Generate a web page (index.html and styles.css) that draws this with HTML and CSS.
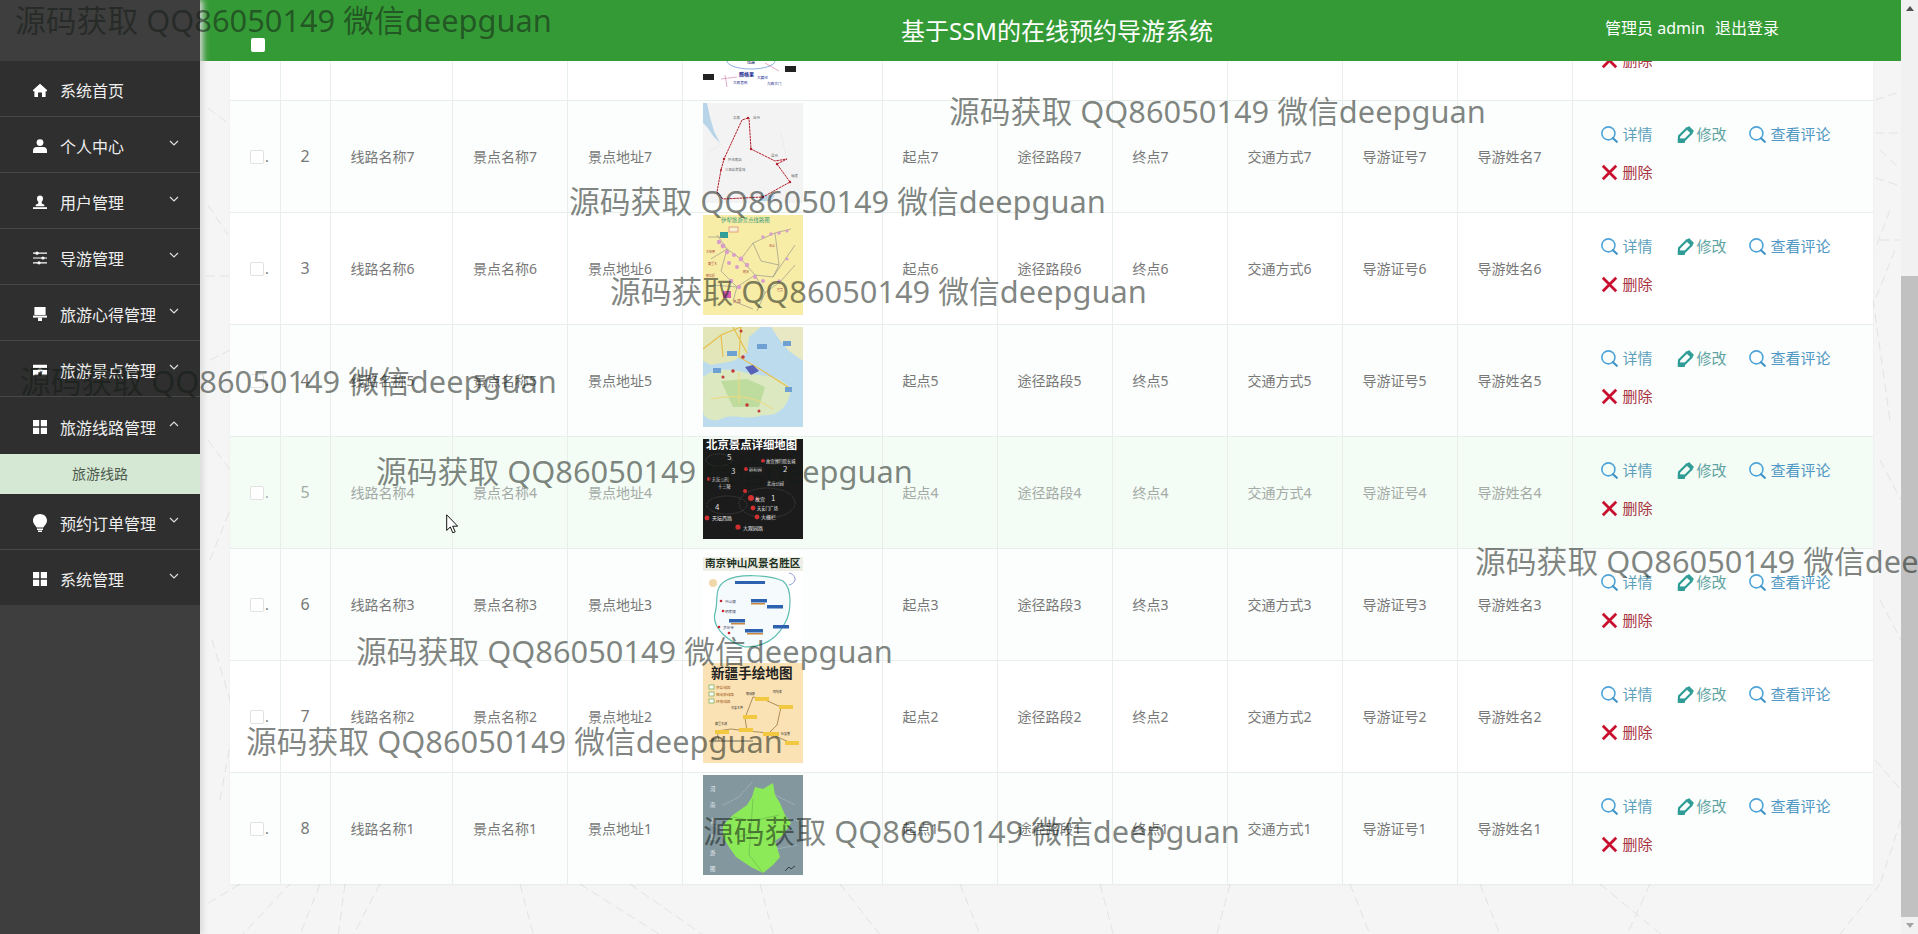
FILE: index.html
```html
<!DOCTYPE html>
<html lang="zh-CN">
<head>
<meta charset="utf-8">
<title>基于SSM的在线预约导游系统</title>
<link rel="stylesheet" href="styles.css">
</head>
<body>
<svg class="defs" width="0" height="0" aria-hidden="true">
  <symbol id="i-search" viewBox="0 0 17 17"><circle cx="7.400" cy="7.400" r="6.500" fill="none" stroke="#4ea4d8" stroke-width="1.600"/><path d="M12 12.200l3.800 3.600" fill="none" stroke="#3f93c8" stroke-width="2.200" stroke-linecap="round"/></symbol>
  <symbol id="i-edit" viewBox="0 0 17 17"><path d="M2 15V10.300L10 2.300l4.700 4.700L6.700 15z" fill="none" stroke="#2f9c95" stroke-width="2.200"/><path d="M12 0 17 5 15.300 6.700 10.300 1.700z" fill="#2f9c95"/><path d="M.8 12.400h7V17h-7z" fill="#2f9c95"/></symbol>
  <symbol id="i-del" viewBox="0 0 17 17"><path d="M1.800 1.800l13.400 13.400M15.200 1.800 1.800 15.200" fill="none" stroke="#c8102e" stroke-width="2.800"/></symbol>
  <symbol id="i-home" viewBox="0 0 14 14"><path d="M7 .8 14 7v1.200h-1.400V14H9V9.400H5V14H1.400V8.200H0V7z" fill="#fff"/></symbol>
  <symbol id="i-user" viewBox="0 0 14 14"><circle cx="7" cy="3.600" r="3.400" fill="#fff"/><path d="M0 14v-2.600C0 9.200 2 8 3.800 8h6.400C12 8 14 9.200 14 11.400V14z" fill="#fff"/></symbol>
  <symbol id="i-tie" viewBox="0 0 14 14"><path d="M4 3.200C4 1.400 5.300.4 7 .4s3 1 3 2.800c0 1.700-.7 3-1.300 3.800V8.400l2.600 1.400v1.400H2.700V9.800l2.600-1.400V7C4.700 6.200 4 4.900 4 3.200z" fill="#fff"/><path d="M0 12.200h14V14H0z" fill="#fff"/></symbol>
  <symbol id="i-sliders" viewBox="0 0 14 14"><path d="M0 2.200h14M0 7h14M0 11.800h14" stroke="#fff" stroke-width="1.200"/><circle cx="4" cy="2.200" r="1.600" fill="#fff"/><circle cx="10" cy="7" r="1.600" fill="#fff"/><circle cx="6" cy="11.800" r="1.600" fill="#fff"/></symbol>
  <symbol id="i-desk" viewBox="0 0 14 14"><path d="M1.400 0h11.200v8H1.400z" fill="#fff"/><path d="M0 8.600h14v2H0z" fill="#fff"/><path d="M5 10.600h4V14H5z" fill="#fff"/></symbol>
  <symbol id="i-shop" viewBox="0 0 16 12"><path d="M0 0h16v3.600H0z" fill="#fff"/><path d="M0 5.600h5l2-1.200h2l2 1.200h5V12H10V8.600H6V12H0z" fill="#fff"/></symbol>
  <symbol id="i-grid" viewBox="0 0 14 14"><path d="M0 0h6.200v6.200H0zM7.800 0H14v6.200H7.800zM0 7.800h6.200V14H0zM7.800 7.800H14V14H7.800z" fill="#fff"/></symbol>
  <symbol id="i-bulb" viewBox="0 0 14 18"><path d="M7 0c3.800 0 7 2.800 7 6.600 0 2.700-1.600 4.100-2.700 5.400-.6.7-.8 1.400-.8 1.600h-7c0-.2-.2-.9-.8-1.600C1.600 10.700 0 9.300 0 6.600 0 2.800 3.200 0 7 0z" fill="#fff"/><path d="M4 14.600h6v1.300H4zM5 16.500h4V18H5z" fill="#fff"/></symbol>
  <symbol id="i-down" viewBox="0 0 10 6"><path d="M1 1l4 4 4-4" fill="none" stroke="#ddd" stroke-width="1.200"/></symbol>
  <symbol id="i-up" viewBox="0 0 10 6"><path d="M1 5l4-4 4 4" fill="none" stroke="#ddd" stroke-width="1.200"/></symbol>
</svg>

<div class="app">
  <aside class="sidebar">
    <div class="brand"></div>
    <nav class="menu">
      <a class="item"><svg class="mi"><use href="#i-home"/></svg><span>系统首页</span></a>
      <a class="item"><svg class="mi"><use href="#i-user"/></svg><span>个人中心</span><svg class="chev"><use href="#i-down"/></svg></a>
      <a class="item"><svg class="mi"><use href="#i-tie"/></svg><span>用户管理</span><svg class="chev"><use href="#i-down"/></svg></a>
      <a class="item"><svg class="mi"><use href="#i-sliders"/></svg><span>导游管理</span><svg class="chev"><use href="#i-down"/></svg></a>
      <a class="item"><svg class="mi"><use href="#i-desk"/></svg><span>旅游心得管理</span><svg class="chev"><use href="#i-down"/></svg></a>
      <a class="item"><svg class="mi"><use href="#i-shop"/></svg><span>旅游景点管理</span><svg class="chev"><use href="#i-down"/></svg></a>
      <a class="item open"><svg class="mi"><use href="#i-grid"/></svg><span>旅游线路管理</span><svg class="chev"><use href="#i-up"/></svg></a>
      <a class="sub">旅游线路</a>
      <a class="item"><svg class="mi bulb"><use href="#i-bulb"/></svg><span>预约订单管理</span><svg class="chev"><use href="#i-down"/></svg></a>
      <a class="item last"><svg class="mi"><use href="#i-grid"/></svg><span>系统管理</span><svg class="chev"><use href="#i-down"/></svg></a>
    </nav>
  </aside>

  <main class="main">
    <svg class="bgnet" viewBox="0 0 1701 934" preserveAspectRatio="none" aria-hidden="true">
      <g fill="none" stroke="#e3e3e3" stroke-width="1" stroke-dasharray="9 5">
        <path d="M8 108 30 125M8 205 28 235M6 276h24M10 360 30 350M8 440 30 470M10 560 30 510M12 640 30 700M20 800 30 745"/>
        <path d="M0 980 90 884M40 884 5 905M120 884 90 960M145 884 135 960M180 884 140 960M320 884 340 960M380 884 500 960M430 884 510 940"/>
        <path d="M560 884 580 960M640 884 700 960M760 884 790 960M900 884 920 960M1030 884 1010 960M1150 884 1180 960M1280 884 1310 960M1400 884 1480 950M1450 884 1420 950M1680 884 1640 934"/>
        <path d="M1675 100 1700 92M1675 133h28M1680 150 1701 170M1675 178 1701 186M1690 210 1675 250M1680 240h20M1695 250 1675 300M1673 300 1690 420M1680 460 1701 500M1680 600 1701 640M1675 760 1701 790M1701 820 1680 884"/>
      </g>
    </svg>

    <header class="topbar">
      <h1 class="title">基于SSM的在线预约导游系统</h1>
      <div class="user"><span>管理员 admin</span><a>退出登录</a></div>
    </header>
    <span class="all-check"></span>

    <table class="grid">
      <colgroup>
        <col class="c-s"><col class="c-s"><col class="c-a"><col class="c-m"><col class="c-m"><col class="c-p">
        <col class="c-m"><col class="c-m"><col class="c-m"><col class="c-m"><col class="c-m"><col class="c-m"><col class="c-o">
      </colgroup>
      <tbody>
        <tr>
          <td><input type="checkbox" class="ck">.</td><td class="num">1</td><td>线路名称8</td><td>景点名称8</td><td>景点地址8</td>
          <td class="pic"><svg class="map" viewBox="0 0 100 100"><rect width="100" height="100" fill="#fff"/><ellipse cx="48" cy="70" rx="24" ry="8" fill="none" stroke="#5a8fd0" stroke-width=".7"/><text x="44" y="73" font-size="4" fill="#226">线路</text><path d="M62 72 76 80M18 88 34 86M22 84 24 96" stroke="#d78bb0" stroke-width=".7" fill="none"/><rect x="0" y="83" width="11" height="6" fill="#222"/><rect x="82" y="75" width="11" height="6" fill="#222"/><text x="36" y="85" font-size="5" font-weight="700" fill="#1a2a90">腾格里</text><text x="54" y="88" font-size="3.600" fill="#1a2a90">大藏经</text><text x="30" y="93" font-size="3.600" fill="#1a2a90">大观音阁</text><text x="64" y="94" font-size="3.600" fill="#1a2a90">九园大门</text></svg></td>
          <td>起点8</td><td>途径路段8</td><td>终点8</td><td>交通方式8</td><td>导游证号8</td><td>导游姓名8</td>
          <td class="ops"><div class="acts"><a class="a-view"><svg class="ai"><use href="#i-search"/></svg>详情</a><a class="a-edit"><svg class="ai"><use href="#i-edit"/></svg>修改</a><a class="a-rev"><svg class="ai"><use href="#i-search"/></svg>查看评论</a><a class="a-del"><svg class="ai"><use href="#i-del"/></svg>删除</a></div></td>
        </tr>
        <tr class="tint">
          <td><input type="checkbox" class="ck">.</td><td class="num">2</td><td>线路名称7</td><td>景点名称7</td><td>景点地址7</td>
          <td class="pic"><svg class="map" viewBox="0 0 100 100"><rect width="100" height="100" fill="#f3f3f3"/><path d="M0 0h4l3 14 4 14 6 12-6-6L4 24 0 20z" fill="#b8d4e8"/><path d="M58 92h14l-4 6H56z" fill="#b8d4e8"/><path d="M78 30 84 58M4 50 20 40" stroke="#e6e6e6" stroke-width=".6" fill="none"/><path d="M45 15 39 17 21 56 18 67 14 89 20 96 60 94 87 79 74 61 84 56 72 58 48 46 46 15z" fill="none" stroke="#b3212c" stroke-width="1" stroke-dasharray="2.600 .6"/><g fill="#b3212c"><circle cx="45" cy="15" r="1.200"/><circle cx="21" cy="56" r="1.200"/><circle cx="18" cy="67" r="1"/><circle cx="60" cy="94" r="1.200"/><circle cx="87" cy="79" r="1.200"/><circle cx="48" cy="46" r="1.200"/><circle cx="74" cy="61" r="1.200"/></g><g font-size="3.400" fill="#666"><text x="30" y="16">太原</text><text x="50" y="16">沧州</text><text x="25" y="58">怀化南站</text><text x="22" y="68">三亚站美食城</text><text x="68" y="54">温州</text><text x="88" y="74">福建</text></g></svg></td>
          <td>起点7</td><td>途径路段7</td><td>终点7</td><td>交通方式7</td><td>导游证号7</td><td>导游姓名7</td>
          <td class="ops"><div class="acts"><a class="a-view"><svg class="ai"><use href="#i-search"/></svg>详情</a><a class="a-edit"><svg class="ai"><use href="#i-edit"/></svg>修改</a><a class="a-rev"><svg class="ai"><use href="#i-search"/></svg>查看评论</a><a class="a-del"><svg class="ai"><use href="#i-del"/></svg>删除</a></div></td>
        </tr>
        <tr>
          <td><input type="checkbox" class="ck">.</td><td class="num">3</td><td>线路名称6</td><td>景点名称6</td><td>景点地址6</td>
          <td class="pic"><svg class="map" viewBox="0 0 100 100"><rect width="100" height="100" fill="#f8eda6"/><text x="18" y="7" font-size="5.400" fill="#3a9a78">伊犁旅游景点线路图</text><rect x="17" y="17" width="8" height="6" fill="#2f9f97"/><rect x="26" y="12" width="9" height="5" fill="#f5f0d0" stroke="#c33" stroke-width=".4"/><path d="M5 22H20M14 20 24 34 38 44 50 28 72 18 88 14M24 34 18 56 34 72 52 60 70 62 92 30M38 44 52 60 62 78 78 66 92 50M34 72 30 86 50 94M62 78 54 96M72 18 76 50 70 62M50 28 58 46 76 50M8 44 24 34M10 70 34 72" fill="none" stroke="#8a8a8a" stroke-width=".6"/><g fill="#d8a0c8"><circle cx="16" cy="27" r="2.200"/><circle cx="20" cy="31" r="2.400"/><circle cx="24" cy="37" r="2.200"/><circle cx="31" cy="40" r="2"/><circle cx="38" cy="44" r="2.400"/><circle cx="44" cy="50" r="2.200"/><circle cx="26" cy="48" r="2"/><circle cx="34" cy="52" r="2"/><circle cx="60" cy="22" r="1.800"/><circle cx="68" cy="19" r="1.800"/><circle cx="76" cy="18" r="1.800"/><circle cx="84" cy="16" r="1.600"/><circle cx="52" cy="62" r="2"/><circle cx="60" cy="66" r="2"/><circle cx="28" cy="66" r="2.200"/><circle cx="36" cy="72" r="2.200"/><circle cx="76" cy="66" r="1.800"/><circle cx="84" cy="44" r="1.600"/></g><rect x="20" y="76" width="8" height="7" fill="#d55cae"/><text x="30" y="88" font-size="4" fill="#a55">大唐</text><g font-size="3" fill="#a44"><text x="3" y="38">大草原</text><text x="5" y="50">赛里木</text><text x="3" y="62">那拉提</text><text x="66" y="32">天山</text><text x="74" y="76">巴音</text><text x="40" y="58">昭苏</text></g></svg></td>
          <td>起点6</td><td>途径路段6</td><td>终点6</td><td>交通方式6</td><td>导游证号6</td><td>导游姓名6</td>
          <td class="ops"><div class="acts"><a class="a-view"><svg class="ai"><use href="#i-search"/></svg>详情</a><a class="a-edit"><svg class="ai"><use href="#i-edit"/></svg>修改</a><a class="a-rev"><svg class="ai"><use href="#i-search"/></svg>查看评论</a><a class="a-del"><svg class="ai"><use href="#i-del"/></svg>删除</a></div></td>
        </tr>
        <tr class="tint">
          <td><input type="checkbox" class="ck">.</td><td class="num">4</td><td>线路名称5</td><td>景点名称5</td><td>景点地址5</td>
          <td class="pic"><svg class="map" viewBox="0 0 100 100"><rect width="100" height="100" fill="#bcdcee"/><path d="M0 0H58L46 10 44 26 30 34 8 38 0 34z" fill="#e2e6b8"/><path d="M68 0h32v34L86 24 76 12z" fill="#e8e8c4"/><path d="M0 50C12 40 30 42 44 46 60 50 74 46 88 62 86 78 76 90 60 88 42 94 30 86 18 92 8 96 0 90 0 84z" fill="#dbe8c0"/><path d="M18 54 44 52 62 60 56 80 30 80z" fill="#bfdc9f"/><path d="M0 22 18 8 38 0M38 0 36 30 60 44 88 62M18 8 20 30M30 0 44 26" fill="none" stroke="#e8bd4a" stroke-width="1.100"/><path d="M36 46V76M8 72C30 68 50 68 70 82" fill="none" stroke="#f0d87c" stroke-width="1"/><g fill="#6fa0d4"><rect x="24" y="24" width="10" height="5"/><rect x="54" y="17" width="10" height="5"/><rect x="80" y="14" width="8" height="5"/><rect x="10" y="41" width="8" height="5"/><rect x="82" y="60" width="7" height="5"/></g><g fill="#c23a3a"><circle cx="38" cy="4" r="1.500"/><circle cx="40" cy="30" r="1.800"/><circle cx="30" cy="44" r="1.800"/><circle cx="20" cy="50" r="1.500"/><circle cx="44" cy="78" r="1.800"/><circle cx="56" cy="84" r="1.500"/></g><path d="M42 40 50 38 56 44 48 48z" fill="#5a62b8"/></svg></td>
          <td>起点5</td><td>途径路段5</td><td>终点5</td><td>交通方式5</td><td>导游证号5</td><td>导游姓名5</td>
          <td class="ops"><div class="acts"><a class="a-view"><svg class="ai"><use href="#i-search"/></svg>详情</a><a class="a-edit"><svg class="ai"><use href="#i-edit"/></svg>修改</a><a class="a-rev"><svg class="ai"><use href="#i-search"/></svg>查看评论</a><a class="a-del"><svg class="ai"><use href="#i-del"/></svg>删除</a></div></td>
        </tr>
        <tr class="hover">
          <td><input type="checkbox" class="ck">.</td><td class="num">5</td><td>线路名称4</td><td>景点名称4</td><td>景点地址4</td>
          <td class="pic"><svg class="map" viewBox="0 0 100 100"><rect width="100" height="100" fill="#1b1b1b"/><text x="3" y="9.500" font-size="11.400" font-weight="700" fill="#fff">北京景点详细地图</text><g font-size="8" fill="#ddd"><text x="24" y="21">5</text><text x="28" y="35">3</text><text x="80" y="33">2</text><text x="68" y="62">1</text><text x="12" y="71">4</text></g><g fill="none" stroke="#888" stroke-width=".4" stroke-dasharray="1 1"><ellipse cx="16" cy="21" rx="13" ry="6"/><ellipse cx="24" cy="66" rx="20" ry="9"/><ellipse cx="64" cy="64" rx="28" ry="15"/></g><g fill="#d03030"><circle cx="60" cy="22" r="2"/><circle cx="43" cy="30" r="2"/><circle cx="6" cy="40" r="2"/><circle cx="42" cy="52" r="2"/><circle cx="48" cy="59" r="3"/><circle cx="50" cy="69" r="2.400"/><circle cx="54" cy="78" r="2.400"/><circle cx="4" cy="79" r="2.400"/><circle cx="35" cy="88" r="2.600"/><circle cx="54" cy="60" r="1.500"/></g><g font-size="4.200" fill="#e8e8e8"><text x="63" y="24">故宫博物院长城</text><text x="46" y="32">颐和园</text><text x="9" y="42">天坛公园</text><text x="15" y="49">十三陵</text><text x="52" y="62" font-size="5">故宫</text><text x="54" y="71">天安门广场</text><text x="58" y="80" font-size="5">大栅栏</text><text x="9" y="81" font-size="5">天坛西路</text><text x="40" y="91" font-size="5">大观园路</text><text x="64" y="46">北海公园</text></g></svg></td>
          <td>起点4</td><td>途径路段4</td><td>终点4</td><td>交通方式4</td><td>导游证号4</td><td>导游姓名4</td>
          <td class="ops"><div class="acts"><a class="a-view"><svg class="ai"><use href="#i-search"/></svg>详情</a><a class="a-edit"><svg class="ai"><use href="#i-edit"/></svg>修改</a><a class="a-rev"><svg class="ai"><use href="#i-search"/></svg>查看评论</a><a class="a-del"><svg class="ai"><use href="#i-del"/></svg>删除</a></div></td>
        </tr>
        <tr class="tint">
          <td><input type="checkbox" class="ck">.</td><td class="num">6</td><td>线路名称3</td><td>景点名称3</td><td>景点地址3</td>
          <td class="pic"><svg class="map" viewBox="0 0 100 100"><rect width="100" height="100" fill="#fff"/><rect y="6" width="100" height="14" fill="#efeee6"/><text x="2" y="16" font-size="10.600" font-weight="700" fill="#232">南京钟山风景名胜区</text><path d="M22 30C36 22 66 24 80 30 90 38 88 62 82 72 74 88 60 96 42 96 28 92 8 78 12 62 16 50 10 38 22 30z" fill="#f5fafc" stroke="#5dbcb0" stroke-width="1.200"/><path d="M86 22C94 24 94 32 86 34" fill="none" stroke="#6a7ac0" stroke-width=".8"/><circle cx="10" cy="32" r="4" fill="#f0d8a8"/><g fill="#2c62b0"><rect x="32" y="30" width="30" height="3"/><rect x="48" y="48" width="16" height="3.500"/><rect x="64" y="54" width="16" height="3.500"/><rect x="26" y="68" width="16" height="3.500"/><rect x="42" y="78" width="18" height="3.500"/><rect x="70" y="74" width="16" height="3.500"/></g><g fill="#c8873a"><rect x="48" y="52" width="14" height="1.500"/><rect x="28" y="72" width="14" height="1.500"/><rect x="44" y="82" width="16" height="1.500"/></g><g fill="#c23"><circle cx="18" cy="50" r="1.300"/><circle cx="20" cy="60" r="1.300"/><circle cx="16" cy="76" r="1.300"/><circle cx="26" cy="82" r="1.300"/></g><g font-size="3.600" fill="#446"><text x="22" y="52">中山陵</text><text x="22" y="62">明孝陵</text><text x="20" y="78">灵谷寺</text></g></svg></td>
          <td>起点3</td><td>途径路段3</td><td>终点3</td><td>交通方式3</td><td>导游证号3</td><td>导游姓名3</td>
          <td class="ops"><div class="acts"><a class="a-view"><svg class="ai"><use href="#i-search"/></svg>详情</a><a class="a-edit"><svg class="ai"><use href="#i-edit"/></svg>修改</a><a class="a-rev"><svg class="ai"><use href="#i-search"/></svg>查看评论</a><a class="a-del"><svg class="ai"><use href="#i-del"/></svg>删除</a></div></td>
        </tr>
        <tr>
          <td><input type="checkbox" class="ck">.</td><td class="num">7</td><td>线路名称2</td><td>景点名称2</td><td>景点地址2</td>
          <td class="pic"><svg class="map" viewBox="0 0 100 100"><rect width="100" height="100" fill="#fae2b4"/><text x="8" y="15" font-size="13.600" font-weight="700" fill="#222">新疆手绘地图</text><g fill="#fff" stroke="#6aa84f" stroke-width=".7"><rect x="6" y="22" width="5" height="4"/><rect x="6" y="29" width="5" height="4"/><rect x="6" y="36" width="5" height="4"/></g><g font-size="3.600" fill="#a8632a"><text x="13" y="26">伊犁线路</text><text x="13" y="33">喀纳斯线路</text><text x="13" y="40">环塔线路</text></g><path d="M50 34 60 36 78 44 74 62 66 70 44 68 28 66 14 68M50 34 42 55 44 68M14 68 16 78M66 70 88 80" fill="none" stroke="#8a6a30" stroke-width=".7"/><g fill="#f2c840"><rect x="52" y="34" width="14" height="4"/><rect x="76" y="42" width="14" height="4"/><rect x="40" y="52" width="14" height="4"/><rect x="36" y="65" width="14" height="4"/><rect x="60" y="69" width="16" height="4"/><rect x="82" y="78" width="14" height="4"/><rect x="12" y="67" width="14" height="4"/></g><g font-size="3" fill="#333"><text x="43" y="32">喀纳斯</text><text x="70" y="30">阿勒泰</text><text x="28" y="46">乌鲁木齐</text><text x="12" y="62">赛里木湖</text><text x="78" y="72">吐鲁番</text><text x="8" y="78">伊宁</text></g><path d="M6 78H50" stroke="#333" stroke-width=".7"/></svg></td>
          <td>起点2</td><td>途径路段2</td><td>终点2</td><td>交通方式2</td><td>导游证号2</td><td>导游姓名2</td>
          <td class="ops"><div class="acts"><a class="a-view"><svg class="ai"><use href="#i-search"/></svg>详情</a><a class="a-edit"><svg class="ai"><use href="#i-edit"/></svg>修改</a><a class="a-rev"><svg class="ai"><use href="#i-search"/></svg>查看评论</a><a class="a-del"><svg class="ai"><use href="#i-del"/></svg>删除</a></div></td>
        </tr>
        <tr class="tint">
          <td><input type="checkbox" class="ck">.</td><td class="num">8</td><td>线路名称1</td><td>景点名称1</td><td>景点地址1</td>
          <td class="pic"><svg class="map" viewBox="0 0 100 100"><rect width="100" height="100" fill="#83979f"/><path d="M52 12 60 14 70 8 72 20 77 28 82 40 88 48 80 60 72 66 77 82 70 90 60 98 48 92 33 82 26 72 20 62 20 50 30 40 44 30 49 22z" fill="#8cea58"/><path d="M30 42 50 46 76 40M34 62 60 56M50 24 46 80 60 98" fill="none" stroke="#5fa845" stroke-width=".5"/><path d="M20 30 36 22 50 6M8 50 20 54M72 20 92 30M84 44 98 46M74 74 94 70" fill="none" stroke="#c8d8dc" stroke-width=".5" stroke-dasharray="2 1"/><g font-size="5.400" fill="#e6eef0"><text x="7" y="16">河</text><text x="7" y="32">南</text><text x="7" y="48">省</text><text x="7" y="64">旅</text><text x="7" y="80">游</text><text x="7" y="96">图</text></g><path d="M82 96l4-4 2 2 4-3" fill="none" stroke="#223" stroke-width=".8"/></svg></td>
          <td>起点1</td><td>途径路段1</td><td>终点1</td><td>交通方式1</td><td>导游证号1</td><td>导游姓名1</td>
          <td class="ops"><div class="acts"><a class="a-view"><svg class="ai"><use href="#i-search"/></svg>详情</a><a class="a-edit"><svg class="ai"><use href="#i-edit"/></svg>修改</a><a class="a-rev"><svg class="ai"><use href="#i-search"/></svg>查看评论</a><a class="a-del"><svg class="ai"><use href="#i-del"/></svg>删除</a></div></td>
        </tr>
      </tbody>
    </table>
  </main>

  <div class="scrollbar">
    <div class="sb-btn"><span class="tri-up"></span></div>
    <div class="sb-track"><div class="sb-thumb"></div></div>
    <div class="sb-btn"><span class="tri-down"></span></div>
  </div>

  <svg class="cursor" viewBox="0 0 12 20" aria-hidden="true"><path d="M.7.8v15.600l3.600-3.400 2.500 5.800 2.400-1-2.500-5.600h5z" fill="#fff" stroke="#111" stroke-width="1"/></svg>

  <div class="marks" aria-hidden="true">
    <span class="wm w1">源码获取 QQ86050149 微信deepguan</span>
    <span class="wm w2">源码获取 QQ86050149 微信deepguan</span>
    <span class="wm w3">源码获取 QQ86050149 微信deepguan</span>
    <span class="wm w4">源码获取 QQ86050149 微信deepguan</span>
    <span class="wm w5">源码获取 QQ86050149 微信deepguan</span>
    <span class="wm w6">源码获取 QQ86050149 微信deepguan</span>
    <span class="wm w7">源码获取 QQ86050149 微信deepguan</span>
    <span class="wm w8">源码获取 QQ86050149 微信deepguan</span>
    <span class="wm w9">源码获取 QQ86050149 微信deepguan</span>
    <span class="wm w10">源码获取 QQ86050149 微信deepguan</span>
  </div>
</div>
</body>
</html>
```

FILE: styles.css
```css
* { box-sizing: border-box; }
html, body { margin: 0; height: 100%; overflow: hidden; }
body {
  font-family: "Noto Sans", "Noto Sans CJK SC", sans-serif;
  font-size: 14px;
  color: #787878;
  background: #f5f5f5;
}
.defs { position: absolute; }
.app { position: relative; display: flex; height: 100vh; overflow: hidden; }

/* sidebar */
.sidebar {
  position: relative;
  z-index: 3;
  flex: none;
  width: 200px;
  background: #3e3e3e;
  box-shadow: 3px 0 6px #d9d9d9;
}
.brand { height: 61px; }
.menu { display: flex; flex-direction: column; }
.item {
  display: flex;
  align-items: center;
  height: 56px;
  padding: 3px 21px 0 33px;
  background: #2f2f2f;
  border-bottom: 1px solid #474747;
  color: #eee;
  font-size: 16px;
}
.item.open { height: 57px; border-bottom: 0; }
.item.last { height: 55px; border-bottom: 0; }
.mi { flex: none; width: 14px; height: 14px; margin-right: 13px; }
.mi.bulb { height: 18px; }
.item span { white-space: nowrap; }
.chev { flex: none; width: 10px; height: 6px; margin: -7px 0 0 auto; }
.sub {
  display: block;
  height: 40px;
  background: #d5e8d4;
  color: #4d5a4d;
  font-size: 14px;
  line-height: 40px;
  text-align: center;
}

/* main */
.main {
  position: relative;
  flex: 1;
  min-width: 0;
  display: flex;
  flex-direction: column;
  justify-content: flex-end;
  padding: 0 28px 50px 30px;
  overflow: hidden;
}
.bgnet { position: absolute; inset: 0; width: 100%; height: 100%; }
.topbar {
  position: absolute;
  z-index: 2;
  top: 0;
  left: 0;
  right: 0;
  height: 61px;
  display: grid;
  grid-template-columns: 1fr auto 1fr;
  align-items: center;
  padding: 0 122px 0 135px;
  background: #349a35;
  color: #fff;
}
.title { grid-column: 2; margin: -2px 0 0; font-size: 24px; font-weight: 400; white-space: nowrap; }
.user { grid-column: 3; justify-self: end; display: flex; gap: 10px; margin-top: -7px; font-size: 16px; white-space: nowrap; }
.all-check {
  position: absolute;
  z-index: 2;
  top: 38px;
  left: 51px;
  width: 14px;
  height: 14px;
  background: #fff;
  border-radius: 2px;
}

/* table */
.grid {
  position: relative;
  flex: none;
  width: 1643px;
  table-layout: fixed;
  border-collapse: collapse;
  background: #fff;
  box-shadow: 0 1px 2px rgba(0,0,0,.05);
}
.c-s { width: 50px; }
.c-a { width: 122.5px; }
.c-m { width: 115px; }
.c-p { width: 199.5px; }
.c-o { width: 301px; }
.grid td {
  height: 112px;
  padding: 0 0 0 20px;
  border: 1px solid #e8eeea;
  white-space: nowrap;
  overflow: hidden;
}
.grid tr:last-child td { border-bottom: 0; }
.grid td:first-child { border-left: 0; }
.grid td:last-child { border-right: 0; }
.tint td { background: #fbfefc; }
.hover td { background: #f3fcf5; color: #a4aaa6; }
.grid td.num { padding: 0; text-align: center; font-size: 16px; }
.ck {
  appearance: none;
  display: inline-block;
  width: 14px;
  height: 14px;
  margin: 0 1px 0 0;
  vertical-align: -2px;
  background: #fff;
  border: 1px solid #e2e2e2;
  border-radius: 2px;
}
.grid td.pic { padding-bottom: 6px; }
.map { display: block; width: 100px; height: 100px; font-family: "Noto Sans CJK SC", sans-serif; }
.grid td.ops { padding: 0 0 5px 28px; }
.acts { display: flex; flex-wrap: wrap; align-items: center; row-gap: 17px; width: 253px; }
.acts a { display: inline-flex; align-items: center; height: 21px; font-size: 15px; line-height: 21px; }
.ai { flex: none; width: 17px; height: 17px; margin-right: 5px; }
.a-view { color: #5d9fbb; margin-right: 24px; }
.a-edit { color: #5fa3a2; margin-right: 22px; }
.a-edit .ai { margin-right: 3px; }
.a-rev { color: #4f97c4; }
.a-del { color: #a8323f; }

/* scrollbar */
.scrollbar {
  position: relative;
  flex: none;
  width: 17px;
  display: flex;
  flex-direction: column;
  background: #f1f1f1;
}
.sb-btn { flex: none; height: 17px; display: flex; align-items: center; justify-content: center; }
.sb-track { flex: 1; display: flex; flex-direction: column; justify-content: flex-end; }
.sb-thumb { height: 641px; background: #c1c1c1; }
.tri-up { border: 4px solid transparent; border-top: 0; border-bottom: 5px solid #505050; }
.tri-down { border: 4px solid transparent; border-bottom: 0; border-top: 5px solid #a3a3a3; }

/* overlays */
.cursor { position: absolute; z-index: 5; left: 446px; top: 514px; width: 12px; height: 20px; }
.marks { position: absolute; z-index: 6; inset: 0; overflow: hidden; pointer-events: none; }
.wm {
  position: absolute;
  font-size: 30.8px;
  line-height: 40px;
  white-space: nowrap;
  color: rgba(20, 28, 22, .55);
}
.w1 { left: 15px; top: 0; }
.w2 { left: 949px; top: 91px; }
.w3 { left: 569px; top: 181px; }
.w4 { left: 610px; top: 271px; }
.w5 { left: 20px; top: 361px; }
.w6 { left: 376px; top: 451px; }
.w7 { left: 1475px; top: 541px; }
.w8 { left: 356px; top: 631px; }
.w9 { left: 246px; top: 721px; }
.w10 { left: 703px; top: 811px; }
```
